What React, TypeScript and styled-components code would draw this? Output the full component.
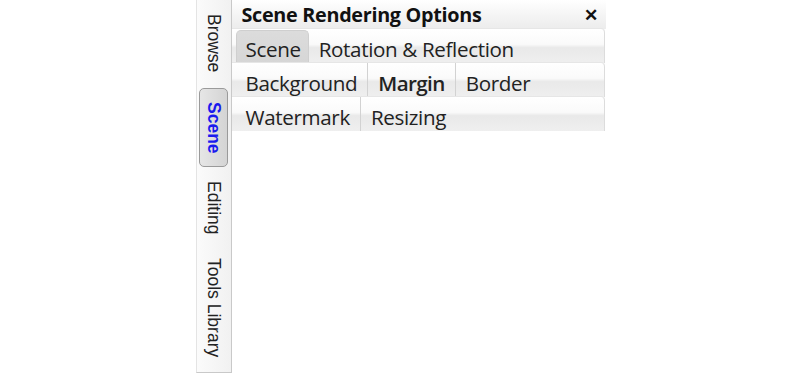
import styled, { createGlobalStyle } from 'styled-components';

const Global = createGlobalStyle`
  html, body { margin: 0; padding: 0; background: #fff; }
  body { width: 800px; height: 378px; overflow: hidden; }
`;

const Frame = styled.div`
  display: flex;
  justify-content: center;
  height: 378px;
`;

const Widget = styled.div`
  display: flex;
  width: 410px;
  height: 378px;
  margin-left: 1px;
`;

const SideStrip = styled.div`
  width: 36px;
  height: 373px;
  box-sizing: border-box;
  border-left: 1px solid #e4e4e4;
  border-right: 1px solid #c9c9c9;
  border-bottom: 1px solid #c9c9c9;
  background: linear-gradient(to right, #fbfbfb, #f1f1f1);
  display: flex;
  flex-direction: column;
  align-items: center;
  padding-top: 4px;
`;

const SideTab = styled.div<{ $active?: boolean; $h: number; $gap?: number }>`
  writing-mode: vertical-rl;
  font-family: 'Liberation Sans', Arial, sans-serif;
  font-size: 17.5px;
  height: ${(p) => p.$h}px;
  margin-top: ${(p) => p.$gap ?? 0}px;
  width: 29px;
  flex-shrink: 0;
  box-sizing: border-box;
  display: flex;
  align-items: center;
  justify-content: center;
  color: ${(p) => (p.$active ? '#1a1aee' : '#222')};
  font-weight: ${(p) => (p.$active ? 700 : 400)};
  border-radius: 5px;
  border: 1px solid ${(p) => (p.$active ? '#9a9a9a' : 'transparent')};
  background: ${(p) => (p.$active ? 'linear-gradient(to right, #e6e6e6, #d4d4d4)' : 'transparent')};
`;

const Panel = styled.div`
  flex: 1;
  display: flex;
  flex-direction: column;
`;

const TitleBar = styled.div`
  height: 29px;
  display: flex;
  align-items: center;
  justify-content: space-between;
  padding: 0 6px 0 10px;
  background: linear-gradient(#ffffff, #f3f3f3 60%, #ececec);
  font-family: 'Open Sans', 'Noto Sans', sans-serif;
`;

const Title = styled.span`
  font-size: 19.8px;
  font-weight: 700;
  color: #111;
  letter-spacing: -0.3px;
`;

const Close = styled.span`
  font-size: 17px;
  font-weight: 700;
  color: #111;
  margin-right: 2px;
`;

const TabRow = styled.div`
  height: 34px;
  display: flex;
  align-items: stretch;
  padding-left: 4px;
  margin-right: 1px;
  border-top-right-radius: 4px;
  border-right: 1px solid #dcdcdc;
  background: linear-gradient(#ffffff, #fafafa 45%, #e9e9e9 55%, #efefef);
  box-shadow: 0 -1px 0 #e6e6e6;
`;

const Tab = styled.div<{ $selected?: boolean; $sep?: boolean; $strong?: boolean }>`
  display: flex;
  align-items: center;
  padding: 5px 10px 0 10px;
  font-family: 'Open Sans', 'Noto Sans', sans-serif;
  font-size: 20.6px;
  font-weight: ${(p) => (p.$strong ? 600 : 400)};
  color: #222;
  letter-spacing: ${(p) => (p.$strong ? '-0.6px' : '-0.35px')};
  border-left: ${(p) => (p.$sep ? '1px solid #d2d2d2' : 'none')};
  ${(p) =>
    p.$selected &&
    `
    margin-top: 1px;
    padding: 4px 7px 0 9px;
    border-radius: 5px 5px 0 0;
    background: linear-gradient(#dcdcdc, #d6d6d6);
    border: 1px solid #cfcfcf;
    border-bottom: none;
  `}
`;

const Body = styled.div`
  flex: 1;
  background: #fff;
`;

export default function App() {
  return (
    <Frame>
      <Global />
      <Widget>
        <SideStrip>
          <SideTab $h={78}>Browse</SideTab>
          <SideTab $h={79} $gap={6} $active>
            Scene
          </SideTab>
          <SideTab $h={81}>Editing</SideTab>
          <SideTab $h={120}>Tools Library</SideTab>
        </SideStrip>
        <Panel>
          <TitleBar>
            <Title>Scene Rendering Options</Title>
            <Close>✕</Close>
          </TitleBar>
          <TabRow>
            <Tab $selected>Scene</Tab>
            <Tab>Rotation &amp; Reflection</Tab>
          </TabRow>
          <TabRow>
            <Tab>Background</Tab>
            <Tab $sep $strong>Margin</Tab>
            <Tab $sep>Border</Tab>
          </TabRow>
          <TabRow>
            <Tab>Watermark</Tab>
            <Tab $sep>Resizing</Tab>
          </TabRow>
          <Body />
        </Panel>
      </Widget>
    </Frame>
  );
}
